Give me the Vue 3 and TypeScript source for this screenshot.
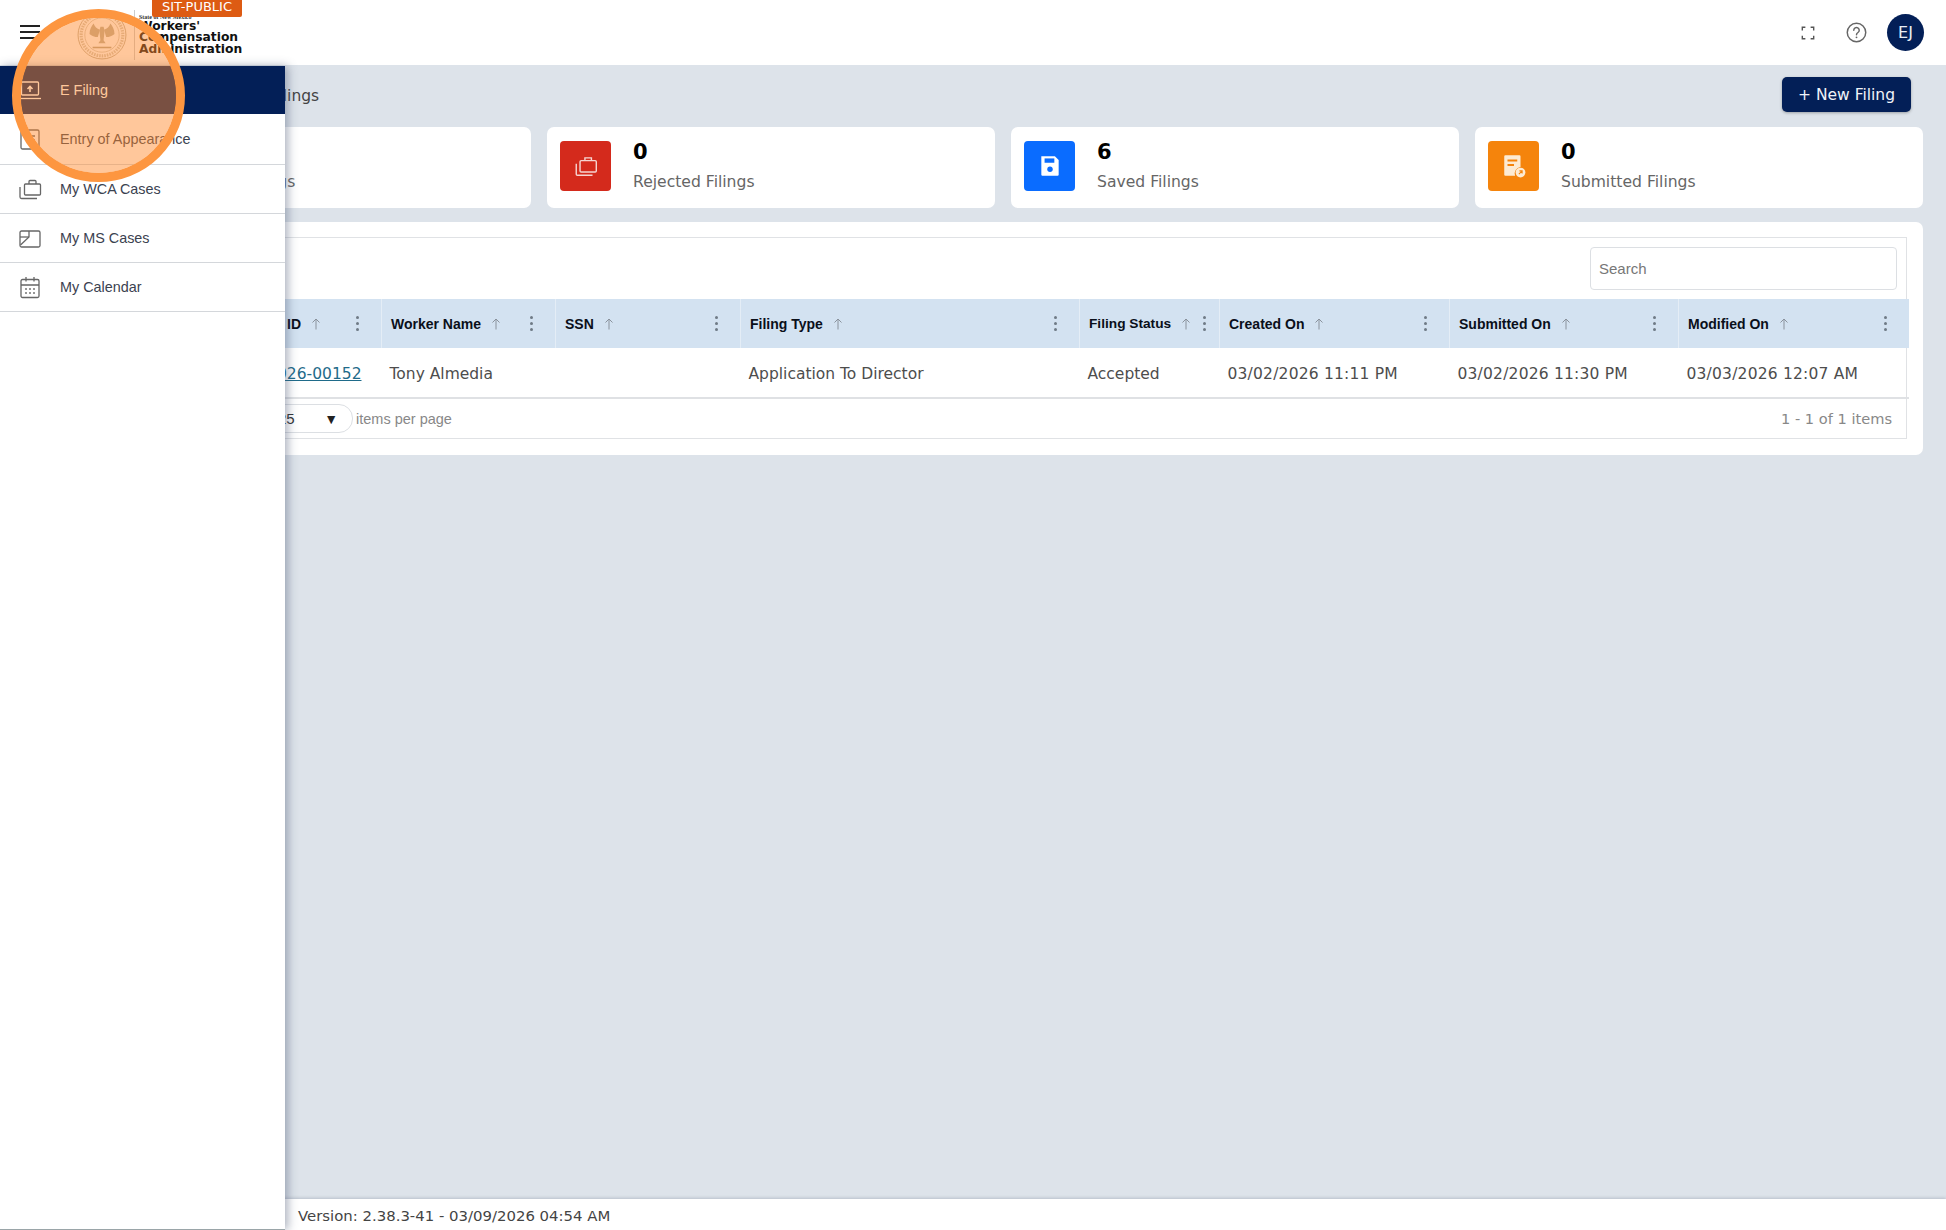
<script setup lang="ts">
interface NavItem {
  label: string;
  icon: string;
  active?: boolean;
}

interface StatCard {
  count: number;
  label: string;
  tone: string;
  icon: string;
}

interface Column {
  title: string;
  width: number;
}

const navItems: NavItem[] = [
  { label: 'E Filing', icon: 'upload', active: true },
  { label: 'Entry of Appearance', icon: 'doc' },
  { label: 'My WCA Cases', icon: 'case' },
  { label: 'My MS Cases', icon: 'ms' },
  { label: 'My Calendar', icon: 'calendar' },
];

const stats: StatCard[] = [
  { count: 1, label: 'Accepted Filings', tone: 'green', icon: 'case' },
  { count: 0, label: 'Rejected Filings', tone: 'red', icon: 'case' },
  { count: 6, label: 'Saved Filings', tone: 'blue', icon: 'save' },
  { count: 0, label: 'Submitted Filings', tone: 'orange', icon: 'sent' },
];

const columns: Column[] = [
  { title: 'ID', width: 289 },
  { title: 'Worker Name', width: 174 },
  { title: 'SSN', width: 185 },
  { title: 'Filing Type', width: 339 },
  { title: 'Filing Status', width: 140 },
  { title: 'Created On', width: 230 },
  { title: 'Submitted On', width: 229 },
  { title: 'Modified On', width: 230 },
];

const row = {
  worker: 'Tony Almedia',
  ssn: '',
  type: 'Application To Director',
  status: 'Accepted',
  created: '03/02/2026 11:11 PM',
  submitted: '03/02/2026 11:30 PM',
  modified: '03/03/2026 12:07 AM',
};
</script>

<template>
  <div class="app">
    <header class="topbar">
      <button type="button" class="menu-btn" aria-label="Menu">
        <span /><span /><span />
      </button>
      <div class="logo">
        <svg class="seal" viewBox="0 0 48 48" fill="none" stroke="#b3a68c">
          <circle cx="24" cy="24" r="23" stroke-width="0.8" />
          <circle cx="24" cy="24" r="20" stroke-width="3" stroke-dasharray="1.5 1" opacity="0.6" />
          <circle cx="24" cy="24" r="16.5" stroke-width="0.5" />
          <g fill="#b3a68c" stroke="none" opacity="0.85">
            <path d="M22 19c-3-1-5-3-6-6-2 2-4 6-4 10 2 2 5 3 8 3z" />
            <path d="M26 19c3-1 5-3 6-6 2 2 4 6 4 10-2 2-5 3-8 3z" />
            <path d="M22.500 16h3l1 4-1 9 2 3h-7l2-3-1-9z" />
          </g>
          <path d="M15 36h18" stroke-width="1.500" />
        </svg>
        <div class="logo-text">
          <small>State of New Mexico</small>
          <strong>Workers'</strong>
          <strong>Compensation</strong>
          <strong>Administration</strong>
        </div>
        <span class="env-badge">SIT-PUBLIC</span>
      </div>
      <div class="top-actions">
        <svg class="top-icon full" viewBox="0 0 16 16" fill="none" stroke="#555" stroke-width="1.6">
          <path d="M1.500 5V1.500H5M11 1.500h3.500V5M14.500 11v3.500H11M5 14.500H1.500V11" />
        </svg>
        <svg class="top-icon help" viewBox="0 0 20 20" fill="none" stroke="#666" stroke-width="1.4">
          <circle cx="10" cy="10" r="8.800" />
          <path d="M7.400 7.800a2.600 2.600 0 1 1 4 2.200c-.9.6-1.400 1-1.400 2.100" stroke-linecap="round" />
          <circle cx="10" cy="14.600" r="0.900" fill="#666" stroke="none" />
        </svg>
        <div class="avatar">EJ</div>
      </div>
    </header>

    <nav class="sidebar">
      <a
        v-for="item in navItems"
        :key="item.label"
        class="nav-item"
        :class="{ active: item.active }"
      >
        <svg class="nav-icon" viewBox="0 0 24 24" fill="none" stroke="currentColor" stroke-width="1.3">
          <template v-if="item.icon === 'upload'">
            <rect x="3.500" y="4" width="17" height="13" rx="1" />
            <path d="M1 20.500h22" />
            <path d="M12 14V8.500M9.500 11L12 8.500l2.500 2.500" stroke-width="1.6" />
          </template>
          <template v-else-if="item.icon === 'doc'">
            <rect x="3" y="3" width="18" height="19" rx="1.500" />
            <path d="M8 9h9M8 13h9" />
          </template>
          <template v-else-if="item.icon === 'case'">
            <rect x="6.500" y="7" width="16" height="11" rx="1" />
            <path d="M11 7V4.500A1 1 0 0 1 12 3.500h5a1 1 0 0 1 1 1V7" />
            <path d="M2 10V20a1.500 1.500 0 0 0 1.500 1.500H19" />
          </template>
          <template v-else-if="item.icon === 'ms'">
            <rect x="2" y="5" width="20" height="16" rx="1.500" />
            <path d="M2.500 19L11 11V5" />
            <path d="M2 11h9" />
          </template>
          <template v-else>
            <rect x="3" y="4.500" width="18" height="18" rx="1.500" />
            <path d="M3 10h18M8 2V6.500M16 2V6.500" />
            <path d="M8 14h.01M12 14h.01M16 14h.01M8 18h.01M12 18h.01M16 18h.01" stroke-width="1.800" stroke-linecap="round" />
          </template>
        </svg>
        <span>{{ item.label }}</span>
      </a>
    </nav>

    <div class="spotlight" />

    <main class="content">
      <div class="title-row">
        <h1>E Filings</h1>
        <button type="button" class="new-btn">+ New Filing</button>
      </div>

      <section class="stats">
        <div v-for="stat in stats" :key="stat.label" class="stat-card">
          <div class="stat-icon" :class="stat.tone">
            <svg v-if="stat.icon === 'case'" viewBox="0 0 24 24" fill="none" stroke="#f6d5d1" stroke-width="1.300">
              <rect x="6.500" y="7" width="15" height="10.500" rx="1" />
              <path d="M11 7V4.500h6V7" />
              <path d="M3 10v9.500a1 1 0 0 0 1 1h14" />
            </svg>
            <svg v-else-if="stat.icon === 'save'" viewBox="0 0 24 24">
              <path d="M4 3h12.500L20 6.500V20a1 1 0 0 1-1 1H5a1 1 0 0 1-1-1z" fill="#fff" />
              <rect x="7" y="5" width="9" height="4" fill="#0a6cff" />
              <circle cx="12" cy="15" r="2.500" fill="#0a6cff" />
            </svg>
            <svg v-else viewBox="0 0 24 24">
              <path d="M4 2h13a1 1 0 0 1 1 1v10a6 6 0 0 0-5 8H4a1 1 0 0 1-1-1V3a1 1 0 0 1 1-1z" fill="#fdebd3" />
              <path d="M6 7h9M6 11h6" stroke="#f5840c" stroke-width="1.800" />
              <circle cx="18" cy="18" r="4.500" fill="#fdebd3" />
              <path d="M16.500 19.500l3-3M17 16.500h2.500V19" stroke="#f5840c" fill="none" />
            </svg>
          </div>
          <div class="stat-text">
            <strong>{{ stat.count }}</strong>
            <span>{{ stat.label }}</span>
          </div>
        </div>
      </section>

      <section class="table-card">
        <div class="grid-box">
          <div class="toolbar">
            <input class="search" type="text" placeholder="Search">
          </div>
          <table class="grid">
            <colgroup>
              <col v-for="col in columns" :key="col.title" :style="{ width: col.width + 'px' }">
            </colgroup>
            <thead>
              <tr>
                <th v-for="col in columns" :key="col.title">
                  <div class="th-inner">
                    <span>{{ col.title }}</span>
                    <svg class="sort" viewBox="0 0 10 12" fill="none" stroke="#8a929c" stroke-width="1">
                      <path d="M5 11.500V1M1.500 4.500L5 1l3.500 3.500" />
                    </svg>
                    <span class="kebab"><b /><b /><b /></span>
                  </div>
                </th>
              </tr>
            </thead>
            <tbody>
              <tr>
                <td class="id-cell"><a class="case-link">EF-2026-00152</a></td>
                <td>{{ row.worker }}</td>
                <td>{{ row.ssn }}</td>
                <td>{{ row.type }}</td>
                <td>{{ row.status }}</td>
                <td class="date">{{ row.created }}</td>
                <td class="date">{{ row.submitted }}</td>
                <td class="date">{{ row.modified }}</td>
              </tr>
            </tbody>
          </table>
          <div class="pager">
            <div class="pager-left">
              <div class="page-size"><span>25</span><i>▼</i></div>
              <span class="per-page">items per page</span>
            </div>
            <span class="range">1 - 1 of 1 items</span>
          </div>
        </div>
      </section>
    </main>

    <footer class="footer">Version: 2.38.3-41 - 03/09/2026 04:54 AM</footer>
  </div>
</template>

<style>
html,
body {
  margin: 0;
  height: 100%;
  overflow: hidden;
}
</style>

<style scoped>
.app {
  position: relative;
  display: flex;
  flex-direction: column;
  height: 1230px;
  background: #dde3ea;
  font-family: "DejaVu Sans", sans-serif;
  color: #444;
}

/* Top bar */
.topbar {
  display: flex;
  align-items: center;
  height: 65px;
  padding: 0 22px 0 20px;
  background: #fff;
}

.menu-btn {
  display: flex;
  flex-direction: column;
  gap: 4px;
  width: 20px;
  margin-top: -2px;
  padding: 0;
  border: none;
  background: none;
}

.menu-btn span {
  display: block;
  height: 2px;
  background: #222;
}

.logo {
  position: relative;
  display: flex;
  align-items: center;
  margin-left: 37px;
  height: 65px;
}

.seal {
  width: 50px;
  height: 50px;
  margin-top: 4px;
  padding-right: 7px;
  border-right: 1px solid #ccc;
}

.logo-text {
  display: flex;
  flex-direction: column;
  margin-left: 4px;
  margin-top: 3px;
}

.logo-text small {
  font-family: "Liberation Serif", serif;
  font-size: 6px;
  line-height: 8px;
  font-weight: 700;
  color: #333;
}

.logo-text strong {
  font-size: 12.300px;
  line-height: 11.600px;
  color: #111;
}

.env-badge {
  position: absolute;
  top: 0;
  left: 75px;
  width: 90px;
  height: 17px;
  border-radius: 0 0 2px 2px;
  background: #dd5b13;
  color: #fff;
  font-size: 13px;
  line-height: 14px;
  text-align: center;
}

.top-actions {
  display: flex;
  align-items: center;
  margin-left: auto;
}

.top-icon.full {
  width: 14px;
  height: 14px;
  margin-right: 31px;
}

.top-icon.help {
  width: 21px;
  height: 21px;
  margin-right: 20px;
}

.avatar {
  display: flex;
  align-items: center;
  justify-content: center;
  width: 37px;
  height: 37px;
  border-radius: 50%;
  background: #031f57;
  color: #e8edf5;
  font-size: 16px;
}

/* Sidebar */
.sidebar {
  position: absolute;
  top: 66px;
  bottom: 0;
  left: 0;
  z-index: 5;
  width: 285px;
  background: #fff;
  border-bottom: 1px solid #9aa5a8;
  box-shadow: 3px 0 9px rgba(70, 85, 110, 0.45);
  font-family: "Liberation Sans", sans-serif;
}

.nav-item {
  display: flex;
  align-items: center;
  gap: 18px;
  height: 48px;
  padding-left: 18px;
  border-bottom: 1px solid #d4d7db;
  color: #3b4250;
  font-size: 14.400px;
}

.nav-item.active {
  height: 48px;
  background: #031f57;
  border-bottom: none;
  color: #fff;
}

.nav-item.active + .nav-item {
  height: 49.500px;
}

.nav-icon {
  flex: none;
  width: 24px;
  height: 24px;
  color: #666;
}

.nav-item.active .nav-icon {
  color: #fff;
}

.spotlight {
  position: absolute;
  top: 9px;
  left: 12px;
  z-index: 6;
  width: 173px;
  height: 173px;
  box-sizing: border-box;
  border: 9px solid #fd9640;
  border-radius: 50%;
  background: rgba(255, 136, 42, 0.47);
  background-clip: padding-box;
  pointer-events: none;
}

/* Main */
.content {
  flex: 1;
  padding: 0 23px 0 83px;
  min-height: 0;
}

.title-row {
  display: flex;
  align-items: center;
  justify-content: space-between;
  height: 62px;
  padding-right: 12px;
}

.title-row h1 {
  margin: 0;
  padding-left: 173px;
  font-size: 15.500px;
  font-weight: 400;
  color: #444;
}

.new-btn {
  width: 129px;
  height: 35px;
  margin-bottom: 3px;
  border: none;
  border-radius: 5px;
  background: #031f57;
  box-shadow: 0 1px 3px rgba(0, 0, 0, 0.3);
  color: #f0f3f8;
  font-family: "DejaVu Sans", sans-serif;
  font-size: 15.500px;
}

.stats {
  display: grid;
  grid-template-columns: repeat(4, 1fr);
  gap: 16px;
}

.stat-card {
  display: flex;
  align-items: flex-start;
  gap: 22px;
  height: 81px;
  box-sizing: border-box;
  padding: 14px 0 0 13px;
  background: #fff;
  border-radius: 7px;
}

.stat-icon {
  display: flex;
  align-items: center;
  justify-content: center;
  width: 51px;
  height: 50px;
  border-radius: 4px;
}

.stat-icon svg {
  width: 26px;
  height: 26px;
}

.stat-icon.green {
  background: #2e9e4f;
}

.stat-icon.red {
  background: #d42a1c;
}

.stat-icon.blue {
  background: #0a6cff;
}

.stat-icon.orange {
  background: #f5840c;
}

.stat-text {
  display: flex;
  flex-direction: column;
  gap: 9px;
  margin-top: -1px;
}

.stat-text strong {
  font-size: 21px;
  line-height: 24px;
  color: #000;
}

.stat-text span {
  font-size: 15.600px;
  line-height: 18px;
  color: #666;
}

.table-card {
  margin-top: 14px;
  padding: 15px 16px 16px 8px;
  background: #fff;
  border-radius: 7px;
}

.grid-box {
  border: 1px solid #e0e2e5;
}

.toolbar {
  display: flex;
  justify-content: flex-end;
  height: 61px;
  padding: 9px 9px 0 0;
  box-sizing: border-box;
}

.search {
  box-sizing: border-box;
  width: 307px;
  height: 43px;
  padding: 0 8px;
  border: 1px solid #dcdfe3;
  border-radius: 4px;
  outline: none;
  font-family: "Liberation Sans", sans-serif;
  font-size: 15px;
}

.search::placeholder {
  color: #777;
}

.grid {
  width: 100%;
  table-layout: fixed;
  border-collapse: collapse;
}

.grid th {
  height: 49px;
  padding: 0 22px 0 9px;
  background: #d3e2f1;
  border-left: 1px solid #e4edf6;
  text-align: left;
  font-family: "Liberation Sans", sans-serif;
  font-size: 14px;
  font-weight: 700;
  color: #0a0f1a;
}

.grid th:first-child {
  padding-left: 194px;
}

.grid th:nth-child(5) {
  padding-right: 13px;
  font-size: 13.700px;
}

.th-inner {
  display: flex;
  align-items: center;
  white-space: nowrap;
}

.sort {
  flex: none;
  width: 10px;
  height: 12px;
  margin-left: 10px;
}

.kebab {
  display: flex;
  flex-direction: column;
  gap: 3px;
  margin-left: auto;
}

.kebab b {
  width: 3px;
  height: 3px;
  border-radius: 50%;
  background: #6f7a86;
}

.grid td {
  height: 50px;
  box-sizing: border-box;
  padding: 2px 8px 0;
  border-bottom: 2px solid #dfe1e4;
  font-size: 15.500px;
  color: #4d4d4d;
  white-space: nowrap;
  overflow: hidden;
}

.grid td.id-cell {
  padding-right: 20px;
  text-align: right;
}

.grid td.date {
  letter-spacing: 0.2px;
}

.case-link {
  color: #1f6b8a;
  text-decoration: underline;
}

.pager {
  display: flex;
  align-items: center;
  justify-content: space-between;
  height: 39px;
  padding: 0 14px 0 121px;
}

.pager-left {
  display: flex;
  align-items: center;
  gap: 3px;
}

.page-size {
  display: flex;
  align-items: center;
  justify-content: space-between;
  box-sizing: border-box;
  width: 140px;
  height: 29px;
  padding: 0 14px 0 64px;
  border: 1px solid #dcdfe3;
  border-radius: 14px;
  font-family: "Liberation Sans", sans-serif;
  font-size: 15px;
  color: #333;
}

.page-size i {
  font-style: normal;
  font-size: 14px;
  color: #222;
}

.per-page {
  font-family: "Liberation Sans", sans-serif;
  font-size: 14.500px;
  color: #888;
}

.range {
  font-size: 14.600px;
  color: #888;
}

.footer {
  display: flex;
  align-items: center;
  height: 31px;
  box-sizing: border-box;
  padding: 3px 0 0 298px;
  background: #fff;
  box-shadow: 0 -1px 3px rgba(70, 85, 110, 0.25);
  font-size: 14.900px;
  color: #444;
}
</style>
